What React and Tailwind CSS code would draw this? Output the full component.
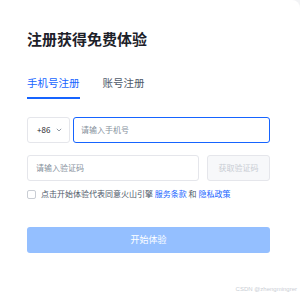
import React, { useState } from 'react';

const font = { fontFamily: '"Noto Sans CJK SC", "Noto Sans", sans-serif' };

const App = () => {
  const [tab, setTab] = useState('phone');
  const [agree, setAgree] = useState(false);

  return (
    <div className="relative w-[300px] h-[300px] bg-[#f2f3f5] overflow-hidden" style={font}>
      <div className="w-[300px] h-[300px] bg-white rounded-tr-[8px] pl-[27px] pt-[28px]">
        {/* Title */}
        <h1 className="text-[15px] leading-[22px] font-semibold text-[#1d2129]">注册获得免费体验</h1>

        {/* Tabs */}
        <div className="flex gap-[23px] mt-[25px] text-[10.5px] leading-[16px]">
          <button
            onClick={() => setTab('phone')}
            className={`pb-[6px] border-b-2 ${tab === 'phone' ? 'text-[#1664ff] border-[#1664ff]' : 'text-[#4e5969] border-transparent'}`}
          >
            手机号注册
          </button>
          <button
            onClick={() => setTab('account')}
            className={`pb-[6px] border-b-2 ${tab === 'account' ? 'text-[#1664ff] border-[#1664ff]' : 'text-[#4e5969] border-transparent'}`}
          >
            账号注册
          </button>
        </div>

        {/* Phone row */}
        <div className="flex gap-[3px] mt-[18px] w-[243px] h-[26px]">
          <div className="flex items-center gap-[6px] w-[43px] border border-[#e5e6eb] rounded-[3px] pl-[9px] text-[8px] text-[#1d2129]">
            <span>+86</span>
            <svg width="6" height="4" viewBox="0 0 6 4" fill="none">
              <path d="M0.8 0.8L3 3L5.2 0.8" stroke="#86909c" strokeWidth="0.9" />
            </svg>
          </div>
          <input
            className="flex-1 border border-[#1664ff] rounded-[3px] px-[7px] text-[8px] outline-none placeholder:text-[#86909c]"
            placeholder="请输入手机号"
          />
        </div>

        {/* Code row */}
        <div className="flex gap-[8px] mt-[12px] w-[243px] h-[26px]">
          <input
            className="w-[172px] border border-[#e5e6eb] rounded-[3px] px-[8px] text-[8px] outline-none placeholder:text-[#86909c]"
            placeholder="请输入验证码"
          />
          <button className="flex-1 bg-[#f7f8fa] border border-[#e5e6eb] rounded-[3px] text-[8px] text-[#c9cdd4]">
            获取验证码
          </button>
        </div>

        {/* Agreement */}
        <label className="flex items-center gap-[5px] mt-[7px] text-[8px] leading-[12px] text-[#4e5969]">
          <input
            type="checkbox"
            checked={agree}
            onChange={() => setAgree(!agree)}
            className="appearance-none w-[9px] h-[9px] border border-[#c9cdd4] rounded-[2px] bg-white"
          />
          <span>
            点击开始体验代表同意火山引擎 <span className="text-[#1664ff]">服务条款</span> 和{' '}
            <span className="text-[#1664ff]">隐私政策</span>
          </span>
        </label>

        {/* Submit */}
        <button className="mt-[27px] w-[243px] h-[26px] bg-[#94bfff] rounded-[3px] text-[9px] text-white">
          开始体验
        </button>
      </div>

      <div className="absolute right-[3px] bottom-[6px] text-[6px] text-[#c9cdd4]" style={{ fontFamily: '"Liberation Sans", sans-serif' }}>
        CSDN @zhengmingrer
      </div>
    </div>
  );
};

export default App;
